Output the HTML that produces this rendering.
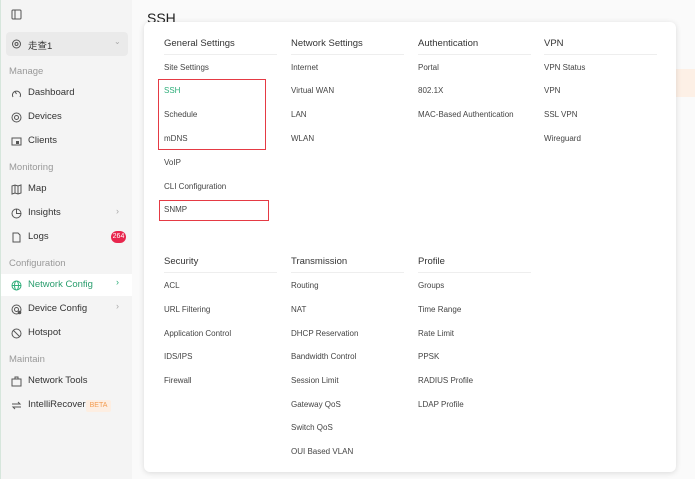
<!DOCTYPE html><html><head><meta charset="utf-8"><style>
*{margin:0;padding:0;box-sizing:border-box}
body{width:695px;height:479px;overflow:hidden;background:#fafafa;font-family:"Liberation Sans","Noto Sans CJK SC",sans-serif;position:relative;color:#333}
.sb{position:absolute;left:0;top:0;width:132px;height:479px;background:#f4f4f4;border-left:1px solid #d6e6dc}
.a{position:absolute;white-space:nowrap}
.sec{font-size:9.5px;color:#999;left:8px}
.it{font-size:9.5px;color:#333;left:27px}
.ic{position:absolute;left:10px;width:11px;height:11px}
.card{position:absolute;left:144px;top:22px;width:532px;height:450px;background:#fff;border-radius:6px;box-shadow:0 1px 6px rgba(0,0,0,.13)}
.h{font-size:9.5px;color:#333}
.m{font-size:8px;color:#444}
.ln{position:absolute;height:1px;width:113px;background:#eee}
.rb{position:absolute;border:1.5px solid #e53a44}
</style></head><body>
<div class="sb">
<svg class="ic" style="top:9px" viewBox="0 0 11 11"><rect x="1" y="1" width="9" height="9" rx="1" fill="none" stroke="#555"/><line x1="4" y1="1" x2="4" y2="10" stroke="#555"/></svg>
<div class="a" style="left:5px;top:32px;width:122px;height:24px;background:#eaeaea;border-radius:4px"></div>
<svg class="ic" style="top:39px" viewBox="0 0 11 11"><circle cx="5.5" cy="5" r="4" fill="none" stroke="#555"/><circle cx="5.5" cy="5" r="1.5" fill="none" stroke="#555"/></svg>
<div class="a it" style="top:38px">走查1</div>
<div class="a" style="left:113px;top:37px;font-size:8px;color:#aaa">⌄</div>
<div class="a sec" style="top:66px">Manage</div>
<svg class="ic" style="top:88px" viewBox="0 0 11 11"><path d="M2 9A4 4 0 1 1 9 9" fill="none" stroke="#555"/><line x1="5.5" y1="6" x2="4" y2="3.5" stroke="#555"/></svg>
<div class="a it" style="top:87px">Dashboard</div>
<svg class="ic" style="top:112px" viewBox="0 0 11 11"><circle cx="5.5" cy="5.5" r="4.5" fill="none" stroke="#555"/><circle cx="5.5" cy="5.5" r="2" fill="none" stroke="#555"/></svg>
<div class="a it" style="top:111px">Devices</div>
<svg class="ic" style="top:136px" viewBox="0 0 11 11"><rect x="1" y="2" width="9" height="7" fill="none" stroke="#555"/><rect x="5" y="5" width="3" height="3" fill="#555"/></svg>
<div class="a it" style="top:135px">Clients</div>
<div class="a sec" style="top:162px">Monitoring</div>
<svg class="ic" style="top:184px" viewBox="0 0 11 11"><path d="M1 2L4 1L7 2L10 1V9L7 10L4 9L1 10Z M4 1V9 M7 2V10" fill="none" stroke="#555"/></svg>
<div class="a it" style="top:183px">Map</div>
<svg class="ic" style="top:208px" viewBox="0 0 11 11"><circle cx="5.5" cy="5.5" r="4.5" fill="none" stroke="#555"/><path d="M5.5 1V5.5H10" fill="none" stroke="#555"/></svg>
<div class="a it" style="top:207px">Insights</div>
<div class="a" style="left:115px;top:206px;font-size:9px;color:#aaa">›</div>
<svg class="ic" style="top:232px" viewBox="0 0 11 11"><path d="M2 1H7L9 3V10H2Z" fill="none" stroke="#555"/></svg>
<div class="a it" style="top:231px">Logs</div>
<div class="a" style="left:110px;top:231px;width:15px;height:12px;border-radius:6px;background:#e8264d;color:#fff;font-size:7px;text-align:center;line-height:12px">264</div>
<div class="a sec" style="top:258px">Configuration</div>
<div class="a" style="left:0;top:274px;width:131px;height:22px;background:#fff"></div>
<svg class="ic" style="top:280px" viewBox="0 0 11 11"><circle cx="5.5" cy="5.5" r="4.5" fill="none" stroke="#2fae7a"/><ellipse cx="5.5" cy="5.5" rx="2" ry="4.5" fill="none" stroke="#2fae7a"/><line x1="1" y1="5.5" x2="10" y2="5.5" stroke="#2fae7a"/></svg>
<div class="a it" style="top:279px;color:#2a9d6e">Network Config</div>
<div class="a" style="left:115px;top:277px;font-size:9px;color:#2fae7a">›</div>
<svg class="ic" style="top:304px" viewBox="0 0 11 11"><circle cx="5.5" cy="5.5" r="4.5" fill="none" stroke="#555"/><circle cx="5.5" cy="5.5" r="2" fill="none" stroke="#555"/><circle cx="8.5" cy="8.5" r="1.8" fill="#555"/></svg>
<div class="a it" style="top:303px">Device Config</div>
<div class="a" style="left:115px;top:301px;font-size:9px;color:#aaa">›</div>
<svg class="ic" style="top:328px" viewBox="0 0 11 11"><circle cx="5.5" cy="5.5" r="4.5" fill="none" stroke="#555"/><line x1="2.5" y1="2.5" x2="8.5" y2="8.5" stroke="#555"/></svg>
<div class="a it" style="top:327px">Hotspot</div>
<div class="a sec" style="top:354px">Maintain</div>
<svg class="ic" style="top:376px" viewBox="0 0 11 11"><rect x="1" y="3" width="9" height="7" fill="none" stroke="#555"/><path d="M4 3V1H7V3" fill="none" stroke="#555"/></svg>
<div class="a it" style="top:375px">Network Tools</div>
<svg class="ic" style="top:400px" viewBox="0 0 11 11"><path d="M1 4H9L7 2M10 7H2L4 9" fill="none" stroke="#555"/></svg>
<div class="a it" style="top:399px">IntelliRecover</div>
<div class="a" style="left:85px;top:400px;width:25px;height:12px;background:#fdeee2;color:#f39b4f;font-size:7px;text-align:center;line-height:12px;border-radius:2px">BETA</div>
</div>
<div class="a" style="left:676px;top:69px;width:19px;height:28px;background:#fdf0e6"></div>
<div class="a" style="left:147px;top:10px;font-size:14px;color:#222">SSH</div>
<div class="card"></div>
<div class="a h" style="left:164px;top:38px">General Settings</div>
<div class="a h" style="left:291px;top:38px">Network Settings</div>
<div class="a h" style="left:418px;top:38px">Authentication</div>
<div class="a h" style="left:544px;top:38px">VPN</div>
<div class="ln" style="left:164px;top:54px"></div><div class="ln" style="left:291px;top:54px"></div><div class="ln" style="left:418px;top:54px"></div><div class="ln" style="left:544px;top:54px"></div>
<div class="a m" style="left:164px;top:63px">Site Settings</div>
<div class="a m" style="left:164px;top:86px;color:#2fae7a">SSH</div>
<div class="a m" style="left:164px;top:110px">Schedule</div>
<div class="a m" style="left:164px;top:134px">mDNS</div>
<div class="a m" style="left:164px;top:158px">VoIP</div>
<div class="a m" style="left:164px;top:182px">CLI Configuration</div>
<div class="a m" style="left:164px;top:205px">SNMP</div>
<div class="a m" style="left:291px;top:63px">Internet</div>
<div class="a m" style="left:291px;top:86px">Virtual WAN</div>
<div class="a m" style="left:291px;top:110px">LAN</div>
<div class="a m" style="left:291px;top:134px">WLAN</div>
<div class="a m" style="left:418px;top:63px">Portal</div>
<div class="a m" style="left:418px;top:86px">802.1X</div>
<div class="a m" style="left:418px;top:110px">MAC-Based Authentication</div>
<div class="a m" style="left:544px;top:63px">VPN Status</div>
<div class="a m" style="left:544px;top:86px">VPN</div>
<div class="a m" style="left:544px;top:110px">SSL VPN</div>
<div class="a m" style="left:544px;top:134px">Wireguard</div>
<div class="rb" style="left:158px;top:79px;width:108px;height:71px"></div>
<div class="rb" style="left:159px;top:200px;width:110px;height:21px"></div>
<div class="a h" style="left:164px;top:256px">Security</div>
<div class="a h" style="left:291px;top:256px">Transmission</div>
<div class="a h" style="left:418px;top:256px">Profile</div>
<div class="ln" style="left:164px;top:272px"></div><div class="ln" style="left:291px;top:272px"></div><div class="ln" style="left:418px;top:272px"></div>
<div class="a m" style="left:164px;top:281px">ACL</div>
<div class="a m" style="left:164px;top:305px">URL Filtering</div>
<div class="a m" style="left:164px;top:329px">Application Control</div>
<div class="a m" style="left:164px;top:352px">IDS/IPS</div>
<div class="a m" style="left:164px;top:376px">Firewall</div>
<div class="a m" style="left:291px;top:281px">Routing</div>
<div class="a m" style="left:291px;top:305px">NAT</div>
<div class="a m" style="left:291px;top:329px">DHCP Reservation</div>
<div class="a m" style="left:291px;top:352px">Bandwidth Control</div>
<div class="a m" style="left:291px;top:376px">Session Limit</div>
<div class="a m" style="left:291px;top:400px">Gateway QoS</div>
<div class="a m" style="left:291px;top:423px">Switch QoS</div>
<div class="a m" style="left:291px;top:447px">OUI Based VLAN</div>
<div class="a m" style="left:418px;top:281px">Groups</div>
<div class="a m" style="left:418px;top:305px">Time Range</div>
<div class="a m" style="left:418px;top:329px">Rate Limit</div>
<div class="a m" style="left:418px;top:352px">PPSK</div>
<div class="a m" style="left:418px;top:376px">RADIUS Profile</div>
<div class="a m" style="left:418px;top:400px">LDAP Profile</div>
</body></html>
